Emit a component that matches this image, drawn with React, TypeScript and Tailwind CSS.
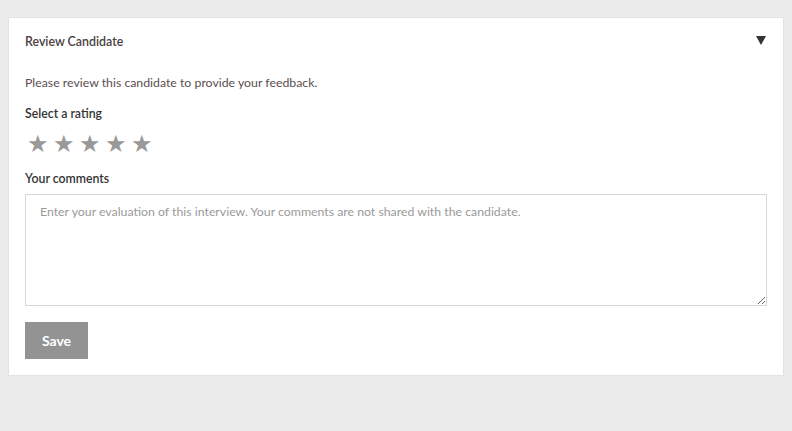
import { useState } from 'react';

export default function App() {
  const [rating, setRating] = useState(0);
  const [comments, setComments] = useState('');

  return (
    <div className="min-h-[431px] bg-[#ececec] pt-[17px] px-2 pb-14 font-['Lato','Liberation_Sans',sans-serif]">
      <div className="bg-white border border-[#e2e2e2]">
        {/* header */}
        <div className="flex items-center justify-between pl-4 pr-4 h-[48px]">
          <h2 className="text-[12.4px] font-semibold text-[#4a4040]">Review Candidate</h2>
          <svg width="10" height="9" viewBox="0 0 10 9" className="mr-[1px] -mt-[4px]">
            <polygon points="0,0 10,0 5,9" fill="#333" />
          </svg>
        </div>

        <div className="px-4 pb-4">
          <p className="mt-[8px] text-[12.3px] text-[#5a4e4e]">Please review this candidate to provide your feedback.</p>

          <p className="mt-[13px] text-[12.3px] font-semibold text-[#333]">Select a rating</p>
          <div className="flex gap-[4px] mt-[7px] ml-[2px]">
            {[1, 2, 3, 4, 5].map((n) => (
              <button
                key={n}
                onClick={() => setRating(n)}
                className={`text-[24px] leading-[24px] cursor-pointer ${n <= rating ? 'text-[#f5a623]' : 'text-[#999]'}`}
              >
                ★
              </button>
            ))}
          </div>

          <p className="mt-[15px] text-[12.3px] font-semibold text-[#333]">Your comments</p>
          <textarea
            value={comments}
            onChange={(e) => setComments(e.target.value)}
            placeholder="Enter your evaluation of this interview. Your comments are not shared with the candidate."
            className="mt-[6px] block w-full h-[112px] border border-[#d6d6d6] px-[14px] py-[8px] text-[12.3px] text-[#333] placeholder:text-[#9a9a9a] outline-none"
          />

          <button className="mt-4 bg-[#939393] text-white font-bold text-[14px] w-[63px] h-[37px]">Save</button>
        </div>
      </div>
    </div>
  );
}
